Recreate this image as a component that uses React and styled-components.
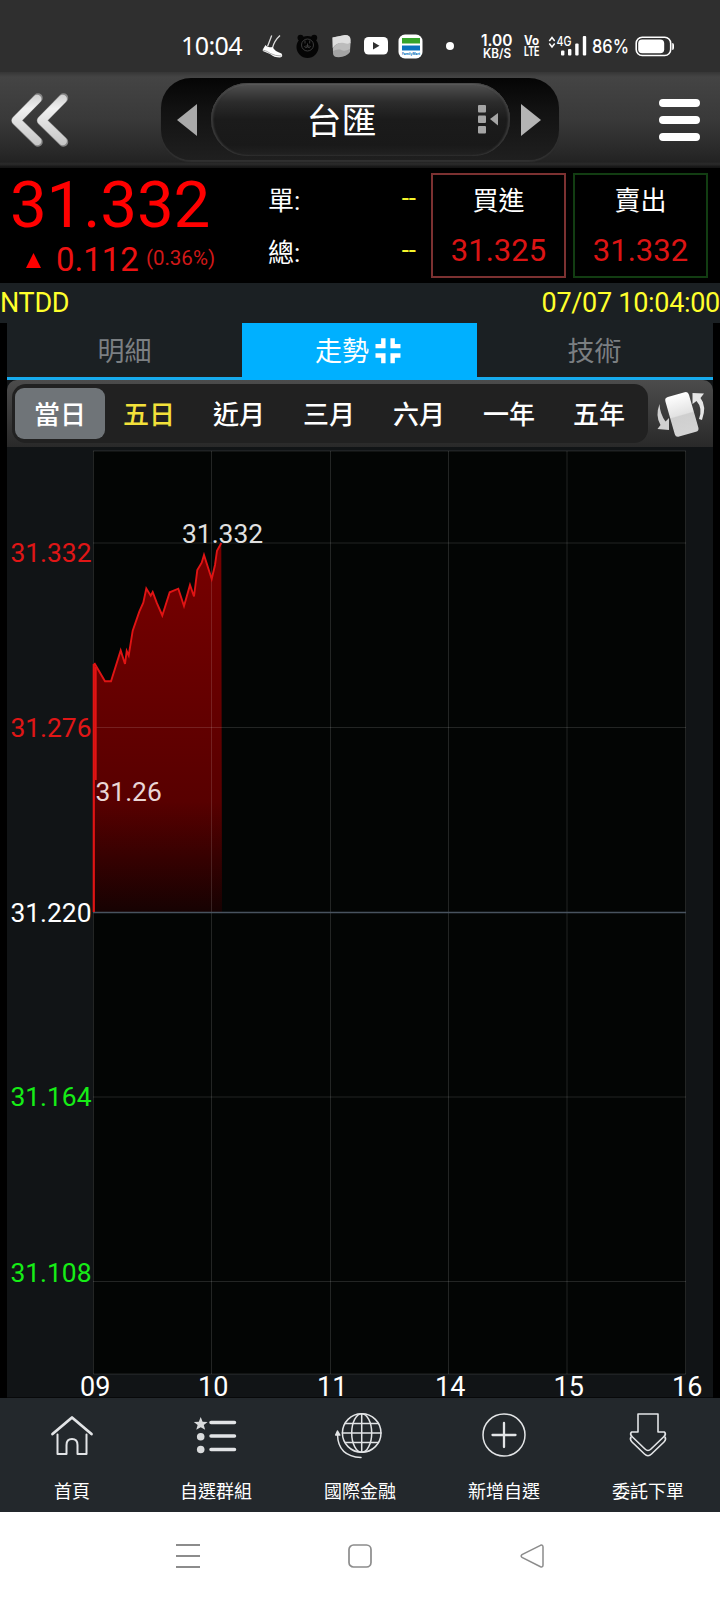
import React from "react";
import styled, {createGlobalStyle} from "styled-components";

const GlobalStyle = createGlobalStyle`
    * { box-sizing: border-box; }
    body { margin: 0; background: #000; }
`;

const Page = styled.div`
    width: 720px;
    height: 1600px;
    display: flex;
    flex-direction: column;
    overflow: hidden;
    background: #000;
    color: #fff;
    font-family: Roboto, 'Noto Sans CJK TC', sans-serif;
    white-space: nowrap;
    svg { display: block; flex: none; overflow: visible; }
`;

/* status bar */
const StatusBar = styled.div`
    height: 72px;
    flex: none;
    display: flex;
    align-items: center;
    padding: 20px 0 0 181px;
    background: #2f2f2f;
`;
const Clock = styled.div`
    width: 81px;
    margin-top: -2px;
    font-family: 'Noto Sans', sans-serif;
    font-size: 25px;
    line-height: 30px;
    letter-spacing: -0.6px;
`;
const StatusIcon = styled.div`
    width: ${p => p.w}px;
    flex: none;
    display: flex;
`;

/* title bar */
const Header = styled.div`
    height: 96px;
    flex: none;
    display: flex;
    align-items: center;
    padding: 0 20px 0 10px;
    background: linear-gradient(#363636 0, #444 5px, #393939 50%, #272727 86%, #222 90px, #2b2b2b 92px, #151515 95px);
`;
const Switcher = styled.div`
    width: 398px;
    height: 82px;
    margin: 0 99px 3px 92px;
    padding: 5px 18px 3px 16px;
    display: flex;
    align-items: center;
    justify-content: space-between;
    border-radius: 30px;
    background: linear-gradient(#050505, #121212 40%, #1f1f1f);
    box-shadow: 0 2px 1px #303030;
`;
const TitlePill = styled.div`
    width: 299px;
    height: 73px;
    margin: 0 -2px 0 0;
    display: flex;
    align-items: center;
    justify-content: flex-end;
    padding-right: 11px;
    border-radius: 37px;
    background: linear-gradient(#525252, #2c2c2c 26%, #1b1b1b 50%, #191919 85%, #222);
    box-shadow: inset 2px 0 2px #3a3a3a, inset -2px 0 2px #3a3a3a, inset 0 2px 1px #5c5c5c;
`;
const Title = styled.div`
    width: 171px;
    padding-top: 6px;
    font-size: 35px;
    line-height: 50px;
`;

/* quote */
const Quote = styled.div`
    height: 115px;
    flex: none;
    display: flex;
    padding-left: 10px;
`;
const PriceBox = styled.div`
    width: 258px;
    color: #f00;
`;
const Price = styled.div`
    font-size: 65.5px;
    line-height: 72px;
    padding-top: 1px;
    margin-bottom: 1px;
    letter-spacing: -0.2px;
`;
const Change = styled.div`
    display: flex;
    align-items: center;
    height: 36px;
    padding-left: 16px;
    font-size: 33px;
    line-height: 36px;
    color: #ee1212;
    svg { margin-right: 15px; }
    small {
        margin-left: 7px;
        margin-top: -4px;
        font-size: 20.5px;
        color: #d01818;
    }
`;
const Volumes = styled.div`
    width: 148px;
    padding-top: 4px;
`;
const VolumeRow = styled.div`
    height: 52px;
    display: flex;
    justify-content: space-between;
    align-items: center;
    font-size: 26px;
    span { color: #f5f52b; }
`;
const DealBox = styled.div`
    width: 135px;
    height: 105px;
    margin: 5px 0 0 ${p => p.left}px;
    padding-top: 7px;
    border: 2px solid ${p => p.line};
    text-align: center;
    font-size: 26px;
    line-height: 38px;
    b {
        display: block;
        margin-top: 8px;
        font-size: 31px;
        font-weight: 400;
        line-height: 46px;
        color: #dc1414;
    }
`;

const InfoRow = styled.div`
    height: 40px;
    flex: none;
    display: flex;
    justify-content: space-between;
    background: #1b2023;
    color: #ffff2c;
    font-size: 27px;
    line-height: 40px;
    letter-spacing: -0.3px;
`;

/* everything between the info row and the bottom menu */
const Panel = styled.div`
    width: 706px;
    margin: 0 7px;
    flex: none;
    background: #111416;
`;
const Tabs = styled.div`
    height: 57px;
    display: flex;
    background: #1b2023;
    border-bottom: 3px solid #17abee;
`;
const Tab = styled.div`
    width: 235px;
    height: ${p => p.active ? 57 : 54}px;
    display: flex;
    align-items: center;
    justify-content: center;
    gap: 6px;
    padding-bottom: ${p => p.active ? 4 : 2}px;
    padding-right: ${p => p.active ? 3 : 0}px;
    background: ${p => p.active ? '#00b0ff' : 'transparent'};
    color: ${p => p.active ? '#fff' : '#7b7f82'};
    font-size: 27px;
    svg { margin-top: 2px; }
`;
const RangeBar = styled.div`
    height: 67px;
    display: flex;
    align-items: center;
    padding-left: 5px;
    border-radius: 10px 10px 0 0;
    background: linear-gradient(#4c4c4c, #3b3b3b 50%, #292929);
`;
const Ranges = styled.div`
    width: 636px;
    height: 59px;
    display: flex;
    align-items: center;
    padding-left: 3px;
    border-radius: 14px;
    background: #212121;
    margin-right: 8px;
`;
const Range = styled.div`
    width: 90px;
    height: 51px;
    padding-right: ${p => p.selected ? 0 : 2}px;
    border-radius: 9px;
    background: ${p => p.selected ? '#6f7478' : 'transparent'};
    color: ${p => p.color || '#fff'};
    font-size: 26px;
    font-weight: 500;
    line-height: 55px;
    text-align: center;
`;

/* bottom menu */
const BottomNav = styled.div`
    height: 114px;
    flex: none;
    display: flex;
    background: #23282c;
`;
const NavItem = styled.div`
    width: 144px;
    display: flex;
    flex-direction: column;
    align-items: center;
    padding-top: 12px;
    font-size: 18px;
    line-height: 26px;
    svg { margin-bottom: 19px; }
`;
const SystemNav = styled.div`
    height: 88px;
    flex: none;
    display: flex;
    align-items: center;
    justify-content: center;
    gap: 148px;
    background: #fff;
`;

const GRID_X = [93.5, 211.5, 330.5, 448.5, 567, 685.5];
const GRID_Y = [451, 543, 727.5, 1097, 1281.5, 1374];
const HOURS = ['09', '10', '11', '14', '15', '16'];
const LEVELS = [
    {y: 562, text: '31.332', color: '#e01616'},
    {y: 737, text: '31.276', color: '#e01616'},
    {y: 921.5, text: '31.220', color: '#fff'},
    {y: 1106, text: '31.164', color: '#16ee16'},
    {y: 1281.5, text: '31.108', color: '#16ee16'},
];
const SERIES = '94.3,663 105,681.3 111,681.3 120.7,650.5 125,664 126.7,651 128.7,655.5 132.7,630.7 139.3,611.7 143.3,602.7 146.3,588.5 150.7,595.7 152.7,592 156.7,602.7 162.3,615.5 169.7,592.3 178.3,588.7 184,606 190,585 194,596.5 197.3,570 201.7,562.7 204,555 211.7,579 215,565 217,550.7 221.3,543';

const Chart = () => (
    <svg width="706" height="951" viewBox="7 447 706 951" fontFamily="Roboto, sans-serif" fontSize="26.4">
        <defs>
            <linearGradient id="fall" x1="0" y1="543" x2="0" y2="912" gradientUnits="userSpaceOnUse">
                <stop offset="0" stopColor="#780000"/>
                <stop offset=".7" stopColor="#580000"/>
                <stop offset="1" stopColor="#160202"/>
            </linearGradient>
        </defs>
        <rect x="93" y="451" width="593" height="923" fill="#030504"/>
        <path d={`M94 912L${SERIES} 222,912Z`} fill="url(#fall)"/>
        <g stroke="#fff" strokeOpacity=".13">
            {GRID_X.map(x => <path key={x} d={`M${x} 451V1374`}/>)}
            {GRID_Y.map(y => <path key={y} d={`M93 ${y}H686`}/>)}
        </g>
        <path d="M93 912.5H686" stroke="#48535f" strokeWidth="1.3"/>
        <path d="M93.8 912V664" stroke="#e01414" strokeWidth="2.2"/>
        <path d="M95.7 780V667" stroke="#e01414" strokeWidth="2"/>
        <polyline points={SERIES} fill="none" stroke="#e01414" strokeWidth="1.9"/>
        {LEVELS.map(l => <text key={l.text} x="91.5" y={l.y + .4} textAnchor="end" fill={l.color}>{l.text}</text>)}
        <text x="182" y="543" fill="#e0e0e0">31.332</text>
        <text x="95.5" y="800.5" fill="#ead6d6">31.26</text>
        {HOURS.map((h, i) => <text key={h} x={GRID_X[i] + 1.8} y="1395.7" fontSize="27" textAnchor="middle" fill="#fff">{h}</text>)}
        <path d="M7 1397.5H713" stroke="#08090a"/>
    </svg>
)

const StatusIcons = () => (
    <>
        <StatusIcon w={34}>
            <svg width="21" height="24" viewBox="0 0 21 24">
                <path d="M9.7 1.5L5.5 12.5M18 1.5Q12 7 10.5 14" fill="none" stroke="#ddd" strokeWidth="1.3"/>
                <path d="M.8 15.5L3.5 11Q5 14 10.5 13Q13 17.5 19.5 19.5Q21.5 23 18 23.5Q12 23.5 8 20L.8 17Z" fill="#fff"/>
                <path d="M1 16Q5 17 8.5 19.5Q13 22 19.5 22" fill="none" stroke="#888" strokeWidth=".7"/>
            </svg>
        </StatusIcon>
        <StatusIcon w={36}>
            <svg width="23" height="24" viewBox="0 0 23 24">
                <circle cx="11.5" cy="13" r="11" fill="#050505"/>
                <circle cx="4.5" cy="3.8" r="3" fill="#050505"/>
                <circle cx="18.2" cy="3.8" r="3" fill="#050505"/>
                <g fill="none" stroke="#3c3c3c" strokeWidth="1">
                    <circle cx="11.5" cy="11" r="6"/>
                    <path d="M9 6.5V9.5M13.7 6.5V9.5M9.5 12H13.5M11.5 9.5V13Q9 15 8.5 12M11.5 13Q14 15 14.5 12"/>
                </g>
            </svg>
        </StatusIcon>
        <StatusIcon w={32}>
            <svg width="20" height="24" viewBox="0 0 20 24">
                <path d="M.5 3.5L13 1Q18.5 1 18.5 6L18 18Q14 24 4 23Q1 22 1 19Z" fill="#a3a3a3"/>
                <path d="M.5 3.5L13 1Q18.5 1 18.5 6V9Q16 12 9 9Q4 9 .7 14Z" fill="#dedede"/>
                <path d="M1 14.5Q5 8 12 9Q17 11 18.4 8L18 15Q12 18 8 15.5Q4 15 1 17Z" fill="#bcbcbc"/>
            </svg>
        </StatusIcon>
        <StatusIcon w={34}>
            <svg width="24" height="18" viewBox="0 0 24 18">
                <rect width="24" height="17.5" rx="4.5" fill="#fff"/>
                <path d="M9 5L15.5 8.8L9 12.5Z" fill="#2f2f2f"/>
            </svg>
        </StatusIcon>
        <StatusIcon w={48}>
            <svg width="25" height="25" viewBox="0 0 25 25">
                <rect x=".5" y=".5" width="24" height="24" rx="6.5" fill="#fff"/>
                <path d="M4 4H22V9.5H4Z" fill="#35a32b"/>
                <path d="M4 11.5H22V16.5H4Z" fill="#0a72bd"/>
                <text x="4" y="21.2" fill="#0a72bd" fontFamily="Inter, sans-serif" fontSize="3.6" fontWeight="700" textLength="18" lengthAdjust="spacingAndGlyphs">FamilyMart</text>
            </svg>
        </StatusIcon>
        <StatusIcon w={35}>
            <svg width="8" height="8" viewBox="0 0 8 8"><circle cx="4" cy="4" r="4" fill="#fff"/></svg>
        </StatusIcon>
        <StatusIcon w={43}>
            <svg width="32" height="26" viewBox="0 0 32 26" fill="#fff" fontFamily="Inter, sans-serif" fontWeight="600">
                <text x="0" y="12.5" fontSize="16" textLength="31.5" lengthAdjust="spacingAndGlyphs">1.00</text>
                <text x="2" y="24.8" fontSize="12.5" textLength="28" lengthAdjust="spacingAndGlyphs">KB/S</text>
            </svg>
        </StatusIcon>
        <StatusIcon w={24}>
            <svg width="16" height="22" viewBox="0 0 16 22" fill="#fff" fontFamily="Inter, sans-serif" fontWeight="700">
                <text x="0" y="10" fontSize="12.5" textLength="15" lengthAdjust="spacingAndGlyphs">Vo</text>
                <text x="0" y="21" fontSize="13" textLength="15.5" lengthAdjust="spacingAndGlyphs">LTE</text>
            </svg>
        </StatusIcon>
        <StatusIcon w={44}>
            <svg width="39" height="22" viewBox="0 0 39 22" fill="#fff">
                <path d="M1.3 6L4 2.5L6.7 6M1.3 8.5L4 12L6.7 8.5" fill="none" stroke="#fff" strokeWidth="1.5"/>
                <text x="8.5" y="11" fontFamily="Inter, sans-serif" fontSize="13.5" fontWeight="500" textLength="15" lengthAdjust="spacingAndGlyphs">4G</text>
                <rect x="13" y="15.5" width="3.4" height="5" rx="1"/>
                <rect x="20" y="14" width="3.4" height="6.5" rx="1"/>
                <rect x="27.2" y="8.5" width="3.4" height="12" rx="1"/>
                <rect x="34.8" y="1" width="3.4" height="19.5" rx="1"/>
            </svg>
        </StatusIcon>
        <StatusIcon w={43}>
            <svg width="37" height="22" viewBox="0 0 37 22" fill="#fff">
                <text x="0" y="17.5" fontFamily="Inter, sans-serif" fontSize="19" fontWeight="500" textLength="37" lengthAdjust="spacingAndGlyphs">86%</text>
            </svg>
        </StatusIcon>
        <svg width="40" height="21" viewBox="0 0 40 21">
            <rect x="1.2" y="1.2" width="34.5" height="18.3" rx="6" fill="none" stroke="#fff" strokeWidth="1.6"/>
            <rect x="3.2" y="3.5" width="26" height="13.7" rx="4" fill="#fff"/>
            <path d="M37.2 7Q39 7 39 9V12Q39 14 37.2 14Z" fill="#fff"/>
        </svg>
    </>
)

const BackIcon = () => (
    <svg width="59" height="56" viewBox="0 0 59 56">
        <defs>
            <linearGradient id="metal" x1="0" y1="0" x2="0" y2="56" gradientUnits="userSpaceOnUse">
                <stop offset="0" stopColor="#c8c8c8"/>
                <stop offset=".3" stopColor="#f0f0f0"/>
                <stop offset="1" stopColor="#c2c2c2"/>
            </linearGradient>
        </defs>
        <g fill="none" strokeLinecap="round" strokeLinejoin="round">
            <path d="M28 6L6 28.500L28 50M53.500 6L31.500 28.500L53.500 50" stroke="#858585" strokeWidth="9.500"/>
            <path d="M27.200 7L6 28.500L27.200 49M52.700 7L31.500 28.500L52.700 49" stroke="url(#metal)" strokeWidth="8.500"/>
        </g>
    </svg>
)

const RotateIcon = () => (
    <svg width="52" height="50" viewBox="0 0 52 50">
        <defs>
            <linearGradient id="phone" x1="0" y1="0" x2="0" y2="1">
                <stop offset="0" stopColor="#fff"/>
                <stop offset=".5" stopColor="#e2e2e2"/>
                <stop offset=".53" stopColor="#cfcfcf"/>
                <stop offset="1" stopColor="#d4d4d4"/>
            </linearGradient>
        </defs>
        <rect x="13.5" y="5" width="24.5" height="41" rx="3.5" transform="rotate(-16 25.5 25)" fill="url(#phone)"/>
        <path d="M3.5 15Q-1 27 4.500 36L1.500 40L13 41L13 29L9.500 32.500Q4 25 3.500 15Z" fill="#d0d0d0"/>
        <path d="M46 31Q51 17 44.500 9L48 4.500L36.500 4V15L40.500 12Q47 19 43 30Z" fill="#e6e6e6"/>
    </svg>
)

const stroke = {fill: 'none', stroke: '#e2e4e6', strokeWidth: 2, strokeLinecap: 'round', strokeLinejoin: 'round'}
const NAV = [
    {
        label: '首頁', icon: <g {...stroke}>
            <path d="M4.5 24L24 7.500L43.500 24" strokeWidth="2.8"/>
            <path d="M9.5 24.500V44H18.500V35Q18.500 29 24 29Q29.500 29 29.500 35V44H38.500V24.500"/>
        </g>
    },
    {
        label: '自選群組', icon: <g fill="#d9dbdc">
            <path d="M8.5 7L10.300 11.500L15 11.700L11.400 14.600L12.700 19L8.500 16.600L4.300 19L5.600 14.600L2 11.700L6.700 11.500Z" transform="translate(-.3 -.4) scale(1.06)"/>
            <circle cx="8.7" cy="26.7" r="3.8"/>
            <circle cx="8.7" cy="39.5" r="3.8"/>
            <path d="M19 12.500H42.500M19 26H42.500M19 39.500H42.500" stroke="#e2e4e6" strokeWidth="3.5" strokeLinecap="round"/>
        </g>
    },
    {
        label: '國際金融', icon: <g {...stroke} strokeWidth="1.5">
            <circle cx="25.7" cy="23" r="19.3"/>
            <ellipse cx="25.7" cy="23" rx="10" ry="19.3"/>
            <path d="M25.7 3.700V42.300M6.400 23H45M9 13.500H42.500M9 32.500H42.500M1.500 24.500Q2 46.500 25 47.500"/>
            <path d="M-.3 25L1.500 21L3.800 25Z" fill="#e2e4e6"/>
        </g>
    },
    {
        label: '新增自選', icon: <g {...stroke}>
            <circle cx="24" cy="25" r="21" strokeWidth="1.5"/>
            <path d="M24 13V37M12.500 25H35.500" strokeWidth="2.3"/>
        </g>
    },
    {
        label: '委託下單', icon: <g {...stroke} strokeWidth="1.6">
            <path d="M14 4H34V22H40.500Q42.500 24 40 26.500L27 39Q24 42 21 39L8 26.500Q5.500 24 7.500 22H14Z"/>
            <path d="M7 27Q5.500 29.500 8 32L20.500 44Q24 47.500 27.500 44L40 32Q42.500 29.500 41 27"/>
        </g>
    },
]

class App extends React.Component {
    render() {
        return (
            <Page>
                <GlobalStyle/>
                <StatusBar>
                    <Clock>10:04</Clock>
                    <StatusIcons/>
                </StatusBar>

                <Header>
                    <BackIcon/>
                    <Switcher>
                        <svg width="20" height="32" viewBox="0 0 20 32"><path d="M0 16L20 0V32Z" fill="#a9a9a9"/></svg>
                        <TitlePill>
                            <Title>台匯</Title>
                            <svg width="21" height="29" viewBox="0 0 21 29" fill="#a5a5a5">
                                <rect width="8" height="7.5" rx="1"/>
                                <rect y="10.5" width="8" height="7.5" rx="1"/>
                                <rect y="21" width="8" height="7.5" rx="1"/>
                                <path d="M12 14L20 8V20.500Z"/>
                            </svg>
                        </TitlePill>
                        <svg width="20" height="32" viewBox="0 0 20 32"><path d="M20 16L0 0V32Z" fill="#b4b4b4"/></svg>
                    </Switcher>
                    <svg width="42" height="44" viewBox="0 0 42 44">
                        <path d="M5 5H38M5 22H38M5 39H38" stroke="#fff" strokeWidth="8" strokeLinecap="round"/>
                    </svg>
                </Header>

                <Quote>
                    <PriceBox>
                        <Price>31.332</Price>
                        <Change>
                            <svg width="15" height="15" viewBox="0 0 15 15"><path d="M7.5 0L15 15H0Z" fill="#f00"/></svg>
                            0.112<small>(0.36%)</small>
                        </Change>
                    </PriceBox>
                    <Volumes>
                        <VolumeRow>單:<span>--</span></VolumeRow>
                        <VolumeRow>總:<span>--</span></VolumeRow>
                    </Volumes>
                    <DealBox left={15} line="#7c3131">買進<b>31.325</b></DealBox>
                    <DealBox left={7} line="#123d12">賣出<b>31.332</b></DealBox>
                </Quote>

                <InfoRow><span>NTDD</span><span>07/07 10:04:00</span></InfoRow>

                <Panel>
                    <Tabs>
                        <Tab>明細</Tab>
                        <Tab active>
                            走勢
                            <svg width="26" height="26" viewBox="0 0 26 26">
                                <path d="M8 0V8H0M17.500 0V8H25.500M8 25.500V17.500H0M17.500 25.500V17.500H25.500" transform="translate(.5 .3) scale(.98)" fill="none" stroke="#fff" strokeWidth="4.5"/>
                            </svg>
                        </Tab>
                        <Tab>技術</Tab>
                    </Tabs>
                    <RangeBar>
                        <Ranges>
                            <Range selected>當日</Range>
                            <Range color="#f3e13a">五日</Range>
                            {['近月', '三月', '六月', '一年', '五年'].map(r => <Range key={r}>{r}</Range>)}
                        </Ranges>
                        <RotateIcon/>
                    </RangeBar>
                    <Chart/>
                </Panel>

                <BottomNav>
                    {NAV.map(n => (
                        <NavItem key={n.label}>
                            <svg width="48" height="50" viewBox="0 0 48 50">{n.icon}</svg>
                            {n.label}
                        </NavItem>
                    ))}
                </BottomNav>

                <SystemNav>
                    <svg width="24" height="24" viewBox="0 0 24 24"><path d="M0 1H24M0 12H24M0 23H24" stroke="#8c8c8c" strokeWidth="1.8"/></svg>
                    <svg width="24" height="24" viewBox="0 0 24 24"><rect x="1" y="1" width="22" height="22" rx="4.5" fill="none" stroke="#8c8c8c" strokeWidth="1.7"/></svg>
                    <svg width="24" height="24" viewBox="0 0 24 24"><path d="M20.5 1.300L2 10.700Q.3 12 2 13.300L20.500 22.700Q23 23.500 23 21V3Q23 .5 20.500 1.300Z" fill="none" stroke="#8c8c8c" strokeWidth="1.5"/></svg>
                </SystemNav>
            </Page>
        )
    }
}

export default App
